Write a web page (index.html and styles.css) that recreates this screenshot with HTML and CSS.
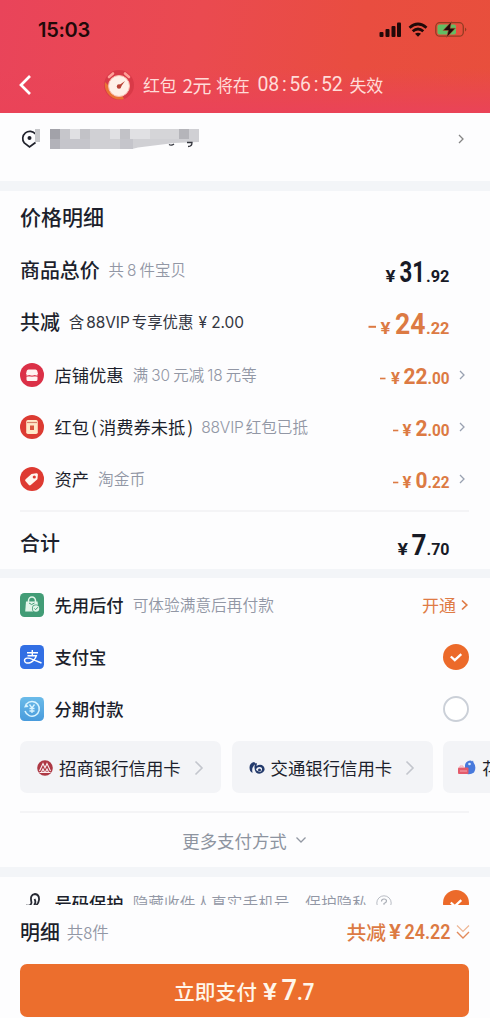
FILE: index.html
```html
<!DOCTYPE html>
<html lang="zh-CN">
<head>
<meta charset="utf-8">
<title>支付</title>
<link rel="stylesheet" href="styles.css">
</head>
<body>
<main class="app">
  <header class="top">
    <div class="status">
      <span class="clock">15:03</span>
      <svg width="88" height="18" viewBox="379 21 88 18">
        <g fill="#210909"><rect x="379.5" y="32" width="4" height="5" rx="1"/><rect x="385.500" y="29" width="4" height="8" rx="1"/><rect x="391.500" y="26" width="4" height="11" rx="1"/><rect x="397" y="22.500" width="4" height="14.500" rx="1"/></g>
        <g fill="none" stroke="#210909" stroke-width="2.800"><path d="M409.500 27.700q8.500-7.400 17 0M412.700 31.300q5.300-4.500 10.600 0"/></g>
        <path d="M415 33.800q3-2.300 6 0l-3 3z" fill="#210909"/>
        <rect x="435.800" y="22.700" width="27.500" height="13.500" rx="4" fill="none" stroke="#923c22" stroke-width="1.300"/>
        <rect x="437.500" y="24.500" width="18.500" height="10" rx="2" fill="#62bd63"/>
        <path d="M465 27.500q2.500 2 0 4z" fill="#923c22"/>
        <path d="M451.500 21.500l-8.500 9h5.300l-1.700 7 8.800-9.300h-5.200z" fill="#210909" stroke="#b65435" stroke-width=".6"/>
      </svg>
    </div>
    <div class="notice">
      <svg class="back" width="14" height="22" viewBox="0 0 14 22"><path d="M12 2L3 11l9 9" fill="none" stroke="#fff" stroke-width="2.700"/></svg>
      <svg class="alarm" width="34" height="34" viewBox="0 0 34 34">
        <circle cx="17" cy="17" r="15" fill="#d93a48"/><path d="M3 14a15 15 0 0 0 19 17l-3-6-13-8z" fill="#e97335"/>
        <path d="M7 9l4-3.500M23 5.500l4 3.500" stroke="#ff9f98" stroke-width="2.600" stroke-linecap="round"/>
        <circle cx="17" cy="18" r="10.500" fill="#fff0e8" stroke="#f8bcae"/><path d="M16 18l7-5-5 7z" fill="#b74236"/><circle cx="17" cy="18.500" r="2.200" fill="#b74236"/>
      </svg>
      <span class="msg">红包</span><span class="msg two">2元</span><span class="msg">将在</span><span class="msg count">08<s>:</s>56<s>:</s>52</span><span class="msg">失效</span>
    </div>
  </header>

  <section class="address">
    <svg width="180" height="24" viewBox="20 127 180 24">
      <path d="M35.500 142.500L29.500 147l-5.200-4a7 7 0 1 1 11.200-9" fill="none" stroke="#20222c" stroke-width="1.700"/><circle cx="29.500" cy="138" r="2" fill="#20222c"/>
      <path d="M35 129h5v13h-5z" fill="#c6c7ca"/>
      <path d="M50 129h149v13l-25 1-36 4.500-6 1.500H50z" fill="#d0d0d4"/>
      <g shape-rendering="crispEdges"><path d="M50 129h10v10H50z" fill="#a2a2a9"/><path d="M60 129h10v10H60z" fill="#c6c6cb"/><path d="M70 129h10v10H70zM130 129h20v10h-20zM110 129h10v10h-10z" fill="#e0e0e3"/><path d="M80 129h10v10H80zM120 129h10v10h-10z" fill="#c2c2c7"/><path d="M50 139h10v10H50z" fill="#b2b2b9"/><path d="M60 139h30v10H60zM120 139h13v10h-13z" fill="#c5c5cb"/><path d="M179 129h10v10h-10z" fill="#b5b5ba"/><path d="M150 129h29v10h-29z" fill="#d5d5d8"/></g>
      <path d="M169 144.500q2.500 1.500 5-.5M187 142.500h5q0 4-4 4" stroke="#33353d" fill="none" stroke-width="1.300"/>
    </svg>
    <svg class="chev gray" width="8" height="12" viewBox="0 0 8 12"><path d="M2 2l4 4-4 4"/></svg>
  </section>

  <section class="prices">
    <h2 class="title">价格明细</h2>
    <div class="row"><b class="label big">商品总价</b><span class="sub sp">共<i>8</i>件宝贝</span>
      <svg class="price dark" viewBox="368 0 82 30"><text x="385.500" y="25" font-size="17" textLength="10" lengthAdjust="spacingAndGlyphs">¥</text><text x="399.500" y="25" font-size="29" textLength="25.500" lengthAdjust="spacingAndGlyphs">31</text><text x="426" y="25" font-size="17" textLength="23.500" lengthAdjust="spacingAndGlyphs">.92</text></svg></div>
    <div class="row"><b class="label big">共减</b><span class="sub ink">含<i>88VIP</i>专享优惠<i class="yen">¥ 2.00</i></span>
      <svg class="price" viewBox="368 0 82 30"><path d="M368.500 17.800h7.500" stroke="#dc7a43" stroke-width="2"/><text x="380.500" y="25" font-size="17" textLength="10" lengthAdjust="spacingAndGlyphs">¥</text><text x="395" y="25" font-size="29" textLength="30.500" lengthAdjust="spacingAndGlyphs">24</text><text x="426" y="25" font-size="17" textLength="23.500" lengthAdjust="spacingAndGlyphs">.22</text></svg></div>
    <div class="row item">
      <svg class="ico" viewBox="0 0 24 24"><circle cx="12" cy="12" r="12" fill="#db3047"/><path d="M8.500 6.500h7q1.500 0 1.800 1.500l.7 3-1 1H7l-1-1 .7-3q.3-1.500 1.800-1.500zM6.500 13.700h11v2.800q0 1.500-1.500 1.500H8q-1.500 0-1.500-1.500z" fill="#fff4f2"/><path d="M6.500 12.600q2.700 1.500 5.500 0 2.700 1.500 5.500 0" stroke="#f6bcc0" fill="none"/></svg>
      <span class="label">店铺优惠</span><span class="sub sp">满<i>30</i>元减<i>18</i>元等</span>
      <svg class="price low" viewBox="368 0 82 30"><path d="M380 18.500h5.500" stroke="#dc7a43" stroke-width="1.600"/><text x="391" y="24" font-size="16" textLength="9" lengthAdjust="spacingAndGlyphs">¥</text><text x="403.500" y="24" font-size="22.500" textLength="24" lengthAdjust="spacingAndGlyphs">22</text><text x="427.500" y="24" font-size="16" textLength="22" lengthAdjust="spacingAndGlyphs">.00</text></svg>
      <svg class="chev" width="8" height="12" viewBox="0 0 8 12"><path d="M2 2l4 4-4 4"/></svg></div>
    <div class="row item">
      <svg class="ico" viewBox="0 0 24 24"><circle cx="12" cy="12" r="12" fill="#dc3b32"/><rect x="6.200" y="5" width="11.600" height="14" rx="1.700" fill="#ffe9c8"/><path d="M7 7.500h10" stroke="#d8856b" stroke-width="1.200"/><path d="M10 10.500h4v4.500h-4z" fill="#d9583f"/></svg>
      <span class="label">红包<span class="paren">(</span>消费券未抵<span class="paren end">)</span></span><span class="sub vip"><i>88VIP</i>红包已抵</span>
      <svg class="price low" viewBox="368 0 82 30"><path d="M393 18.500h5.300" stroke="#dc7a43" stroke-width="1.600"/><text x="402.500" y="24" font-size="16" textLength="9" lengthAdjust="spacingAndGlyphs">¥</text><text x="415.500" y="24" font-size="22.500" textLength="12" lengthAdjust="spacingAndGlyphs">2</text><text x="427.500" y="24" font-size="16" textLength="22" lengthAdjust="spacingAndGlyphs">.00</text></svg>
      <svg class="chev" width="8" height="12" viewBox="0 0 8 12"><path d="M2 2l4 4-4 4"/></svg></div>
    <div class="row item">
      <svg class="ico" viewBox="0 0 24 24"><circle cx="12" cy="12" r="12" fill="#de3a31"/><path d="M11.500 7l4.800-.8q1.700-.2 1.600 1.500l-.5 4.600-6.600 5.800q-1 .8-1.900 0l-3.500-4q-.8-1 .2-1.900z" fill="#fff7ef"/><circle cx="14.300" cy="10" r="1.600" fill="#de3a31"/></svg>
      <span class="label">资产</span><span class="sub">淘金币</span>
      <svg class="price low" viewBox="368 0 82 30"><path d="M393 18.500h5.300" stroke="#dc7a43" stroke-width="1.600"/><text x="402.500" y="24" font-size="16" textLength="9" lengthAdjust="spacingAndGlyphs">¥</text><text x="415.500" y="24" font-size="22.500" textLength="12" lengthAdjust="spacingAndGlyphs">0</text><text x="427.500" y="24" font-size="16" textLength="22" lengthAdjust="spacingAndGlyphs">.22</text></svg>
      <svg class="chev" width="8" height="12" viewBox="0 0 8 12"><path d="M2 2l4 4-4 4"/></svg></div>
    <div class="row total"><b class="label big">合计</b>
      <svg class="price dark" viewBox="368 0 82 30"><text x="397.500" y="25" font-size="17" textLength="10.500" lengthAdjust="spacingAndGlyphs">¥</text><text x="411.500" y="25" font-size="29" textLength="15" lengthAdjust="spacingAndGlyphs">7</text><text x="426.500" y="25" font-size="17" textLength="23" lengthAdjust="spacingAndGlyphs">.70</text></svg></div>
  </section>

  <section class="methods">
    <div class="row item pay">
      <svg class="ico" viewBox="0 0 24 24"><rect width="24" height="24" rx="4.500" fill="#429c76"/><path d="M8.500 9V7.500a3.500 3.500 0 0 1 7 0V9" fill="none" stroke="#e2f5e9" stroke-width="1.500"/><path d="M6 8.500h11.500l.6 5-3 5H5.200z" fill="#e2f5e9"/><path d="M9 10q2.500 3 5.500 0" stroke="#429c76" fill="none"/><circle cx="16" cy="15.500" r="4" fill="#429c76"/><circle cx="16" cy="15.500" r="3.200" fill="#e2f5e9"/><path d="M14.300 15.400l1.300 1.300 2.300-2.500" stroke="#429c76" fill="none"/></svg>
      <b class="label">先用后付</b><span class="sub">可体验满意后再付款</span>
      <span class="open">开通<svg width="9" height="12" viewBox="0 0 9 12"><path d="M2 1.500L6.800 6 2 10.500" fill="none" stroke="#df7b45" stroke-width="1.700"/></svg></span></div>
    <div class="row item pay">
      <svg class="ico" viewBox="0 0 24 24"><rect width="24" height="24" rx="4.500" fill="#326fe4"/><g fill="none" stroke="#fff" stroke-width="1.400"><path d="M7 7.800h11M12.300 5v5.500M7.500 10.800h8.800q-1.500 4.700-5.800 6.700c-3.500 1.300-6 .2-6-2 0-3 4.500-2.800 8-1.200l9 3.700"/></g></svg>
      <b class="label">支付宝</b>
      <svg class="radio" viewBox="0 0 26 26"><circle cx="13" cy="13" r="13" fill="#ec6a2a"/><path d="M7.800 12.500l4 3.700 6.500-6" fill="none" stroke="#fff" stroke-width="2.300"/></svg></div>
    <div class="row item pay">
      <svg class="ico" viewBox="0 0 24 24"><defs><linearGradient id="sky" x2="0" y2="1"><stop stop-color="#6bbbe9"/><stop offset="1" stop-color="#489bdc"/></linearGradient></defs><rect width="24" height="24" rx="4.500" fill="url(#sky)"/><path d="M6.500 7A7.300 7.300 0 1 1 5 14" fill="none" stroke="#d9f4ff" stroke-width="1.500"/><path d="M4 10.500l4.500-.5-2.500-4z" fill="#d9f4ff"/><path d="M9.500 7.500l2.500 3.500 2.500-3.500M12 11v5M9.500 11.500h5M9.500 14h5" fill="none" stroke="#d9f4ff" stroke-width="1.300"/></svg>
      <b class="label">分期付款</b>
      <svg class="radio" viewBox="0 0 26 26"><circle cx="13" cy="13" r="12" fill="#fff" stroke="#cbd0d8" stroke-width="1.900"/></svg></div>
    <div class="chips">
      <div class="chip"><svg width="16" height="16" viewBox="0 0 16 16"><circle cx="8" cy="8" r="7.800" fill="#ad3844"/><path d="M2.500 11L6 3.500 8 8l2-4.500 3.500 7.500M4.500 12l1.500-3 1.500 3M8.500 12L10 9l1.500 3" stroke="#fbeef0" stroke-width="1.100" fill="none"/><path d="M2.500 12.500h11" stroke="#fbeef0"/></svg><span>招商银行信用卡</span><svg class="go" width="10" height="16" viewBox="0 0 10 16"><path d="M1.500 1.500L8 8l-6.500 6.500"/></svg></div>
      <div class="chip"><svg width="16" height="16" viewBox="0 0 16 16"><path d="M5 2Q.5 3 .5 7.500q0 4 3 5.500Q2 7 7 3.500z" fill="#243b6c"/><path d="M6 4l2-1-.5 3q4-2.500 7 .3 2.500 3.500-.5 6-3.500 2.700-7 .2-2.500-4-1-8.500z" fill="#243b6c"/><path d="M7 10q.5-3 3.500-3t2.500 2.500-2.500 2.500z" fill="#f3f4f7"/><circle cx="10.500" cy="10" r="1.500" fill="#243b6c"/></svg><span>交通银行信用卡</span><svg class="go" width="10" height="16" viewBox="0 0 10 16"><path d="M1.500 1.500L8 8l-6.500 6.500"/></svg></div>
      <div class="chip last"><svg width="18" height="16" viewBox="0 0 18 16"><path d="M7 5q1-4.500 6-4.500l1 1 1-1 .5 2Q19 7 16 12.500q-4 3-9 1z" fill="#4779dc"/><circle cx="11.500" cy="4" r="1.300" fill="#d8e8ff"/><rect y="7.500" width="10.500" height="6.500" rx="1" fill="#e45b6b"/><path d="M2 8V6h3v2M2 11h7" stroke="#f8a7b0" fill="none"/></svg><span>花</span></div>
    </div>
    <div class="more">更多支付方式<svg width="12" height="8" viewBox="0 0 12 8"><path d="M1.500 1.500L6 6l4.500-4.500" fill="none" stroke="#9298a3" stroke-width="1.300"/></svg></div>
  </section>

  <section class="protect">
    <div class="row item pay">
      <svg class="ico" viewBox="0 0 24 24"><path d="M6 14.500q5 1 5.500-3-2-8 3.500-8.500 4.500.5 4 6-.5 4-4.500 6.500M14.500 8q2 3.500-.5 6" fill="none" stroke="#272a34" stroke-width="1.800"/></svg>
      <b class="label">号码保护</b><span class="sub">隐藏收件人真实手机号，保护隐私</span>
      <svg class="help" width="16" height="16" viewBox="0 0 16 16"><circle cx="8" cy="8" r="7.200" fill="none" stroke="#b9bdc4"/><path d="M5.500 6.500q0-2.500 2.500-2.500t2.500 2Q10.500 7.500 8 8.500v1.300M8 11v1.500" fill="none" stroke="#a9adb5" stroke-width="1.200"/></svg>
      <svg class="radio" viewBox="0 0 26 26"><circle cx="13" cy="13" r="13" fill="#ec6a2a"/><path d="M7.800 12.500l4 3.700 6.500-6" fill="none" stroke="#fff" stroke-width="2.300"/></svg></div>
  </section>

  <footer class="bottom">
    <div class="summary"><b class="label big">明细</b><span class="count8">共8件</span>
      <span class="saved">共减</span><svg class="amt" width="62" height="24" viewBox="388 0 62 24"><text x="388" y="18.500" font-size="20" textLength="12" lengthAdjust="spacingAndGlyphs">¥</text><text x="403.500" y="18.500" font-size="21" textLength="46" lengthAdjust="spacingAndGlyphs">24.22</text></svg>
      <svg class="dbl" width="14" height="16" viewBox="0 0 14 16"><path d="M1 1.500L7 7.500l6-6" fill="none" stroke="#eeb694" stroke-width="1.200"/><path d="M1 8l6 6 6-6" fill="none" stroke="#e28a5b" stroke-width="1.400"/></svg></div>
    <button class="cta"><span>立即支付</span><svg width="52" height="28" viewBox="264 0 52 28"><text x="264" y="23" font-size="23" textLength="14" lengthAdjust="spacingAndGlyphs">¥</text><text x="282.500" y="23" font-size="29" textLength="15.500" lengthAdjust="spacingAndGlyphs">7</text><text x="298" y="23" font-size="23.500" textLength="17.500" lengthAdjust="spacingAndGlyphs">.7</text></svg></button>
  </footer>
</main>
</body>
</html>
```
FILE: styles.css
```css
* { box-sizing: border-box; }
body { margin: 0; background: #fff; font-family: "Noto Sans CJK SC", sans-serif; overflow: hidden; }
svg { display: block; flex: none; }
.app { width: 490px; height: 1018px; display: flex; flex-direction: column; overflow: hidden; background: #fdfdfe; color: #1c1f2c; white-space: nowrap; }
.app > * { flex: none; }

.top { height: 113px; padding-top: 20px; background: linear-gradient(to top, #ea4358 0, rgba(234, 67, 88, 0) 45px), linear-gradient(100deg, #e9445a 0%, #ea4a50 40%, #e94d40 72%, #e84f3c 100%); }
.status { height: 20px; padding: 0 23px 0 38px; display: flex; align-items: center; justify-content: space-between; }
.clock { font: 600 20px/20px Inter, sans-serif; color: #210909; letter-spacing: -.3px; }
.notice { height: 34px; margin-top: 28px; padding-left: 18px; display: flex; align-items: center; color: #ffdcd8; }
.alarm { margin: 0 7px 0 70px; }
.msg { font-size: 17px; line-height: 34px; margin-right: 6px; letter-spacing: -.2px; }
.two { font-size: 19px; letter-spacing: -.6px; margin-right: 5px; }
.count { font-family: Roboto, sans-serif; font-weight: 400; font-size: 19.5px; letter-spacing: -.3px; margin-right: 7px; margin-left: 2px; }
.count s { text-decoration: none; padding: 0 3px; }

.address { height: 68px; padding: 14px 25px 0 20px; display: flex; justify-content: space-between; }
.chev { fill: none; stroke: #99a1b1; stroke-width: 1.3; }
.gray { stroke: #858585; margin-top: 6px; }

.prices { border-top: 10px solid #f3f5f8; padding: 0 21px 0 20px; height: 388px; }
.title { margin: 0; height: 53px; font-size: 21px; line-height: 51px; font-weight: 500; }
.row { height: 52.3px; display: flex; align-items: center; }
.label { font-size: 17.3px; line-height: 26px; font-weight: 400; }
b.label { font-weight: 500; }
.label.big { font-size: 19.9px; }
.sub { font-size: 15.7px; line-height: 24px; color: #9297a5; margin-left: 9px; font-weight: 350; }
.sub i { font-family: Inter, sans-serif; font-style: normal; margin: 0 2px; }
.sp { font-size: 15.4px; letter-spacing: .1px; }
.sp i { margin: 0 3px; }
.ink { color: #333641; font-size: 15.4px; font-weight: 400; }
.sub .yen { margin: 0 0 0 5px; }
.vip { margin-left: 6px; font-size: 15.6px; }
.vip i { letter-spacing: -.2px; }
.paren { padding: 0 2px; }
.end { padding-right: 0; }
.ico { width: 24px; height: 24px; margin-right: 10.5px; }
.price { width: 82px; height: 30px; margin: 4px 19px 0 auto; fill: #dc7a43; font: 700 17px Roboto, sans-serif; overflow: visible; }
.price.dark { fill: #171a26; }
.price.low { margin: 0 8px 0 auto; }
.item .chev { margin-right: 3px; }
.total { height: 58px; margin-top: 5px; border-top: 2px solid #f4f4f6; padding-top: 5px; }

.methods { border-top: 9px solid #f3f5f8; height: 298px; padding: 0 21px 0 20px; }
.radio { width: 26px; height: 26px; margin-left: auto; }
.open { display: flex; align-items: center; gap: 4px; margin-left: auto; font-size: 17px; color: #df7b45; }
.chips { display: flex; gap: 10.5px; margin: 6px -21px 0 0; overflow: hidden; }
.chip { width: 201px; height: 52px; flex: none; border-radius: 7px; background: #f3f4f7; display: flex; align-items: center; padding: 2px 0 0 17px; font-size: 17.4px; }
.chip span { margin-left: 6px; }
.chip .go { margin-left: 13px; }
.go { fill: none; stroke: #c3c6cd; stroke-width: 1.6; }
.last { width: 90px; padding-left: 15px; }
.more { height: 55px; margin-top: 18px; border-top: 2px solid #f4f4f6; display: flex; align-items: center; justify-content: center; gap: 8px; padding-top: 2px; font-size: 17.4px; color: #8d94a0; }
.methods .pay { padding-top: 1px; }

.protect { border-top: 10px solid #f3f5f8; height: 38px; overflow: hidden; padding: 0 21px 0 20px; }
.help { margin-left: 8px; }
.bottom { padding: 0 20px; }
.summary { height: 53px; margin-bottom: 6px; display: flex; align-items: center; }
.count8 { font-size: 16.5px; color: #9297a5; margin-left: 7px; font-weight: 350; }
.saved { margin-left: auto; font-size: 19.8px; font-weight: 500; color: #dc7a43; }
.amt { margin-left: 3px; fill: #dc7a43; font: 600 19px Roboto, sans-serif; }
.dbl { margin-left: 5px; }
.cta { width: 449px; height: 53px; border: 0; border-radius: 7px; background: #ec6e2d; color: #fff6ea; display: flex; align-items: center; justify-content: center; gap: 6px; padding: 0; font: 500 20.7px "Noto Sans CJK SC", sans-serif; }
.cta svg { fill: #fff6ea; font: 600 22px Roboto, sans-serif; }
```
